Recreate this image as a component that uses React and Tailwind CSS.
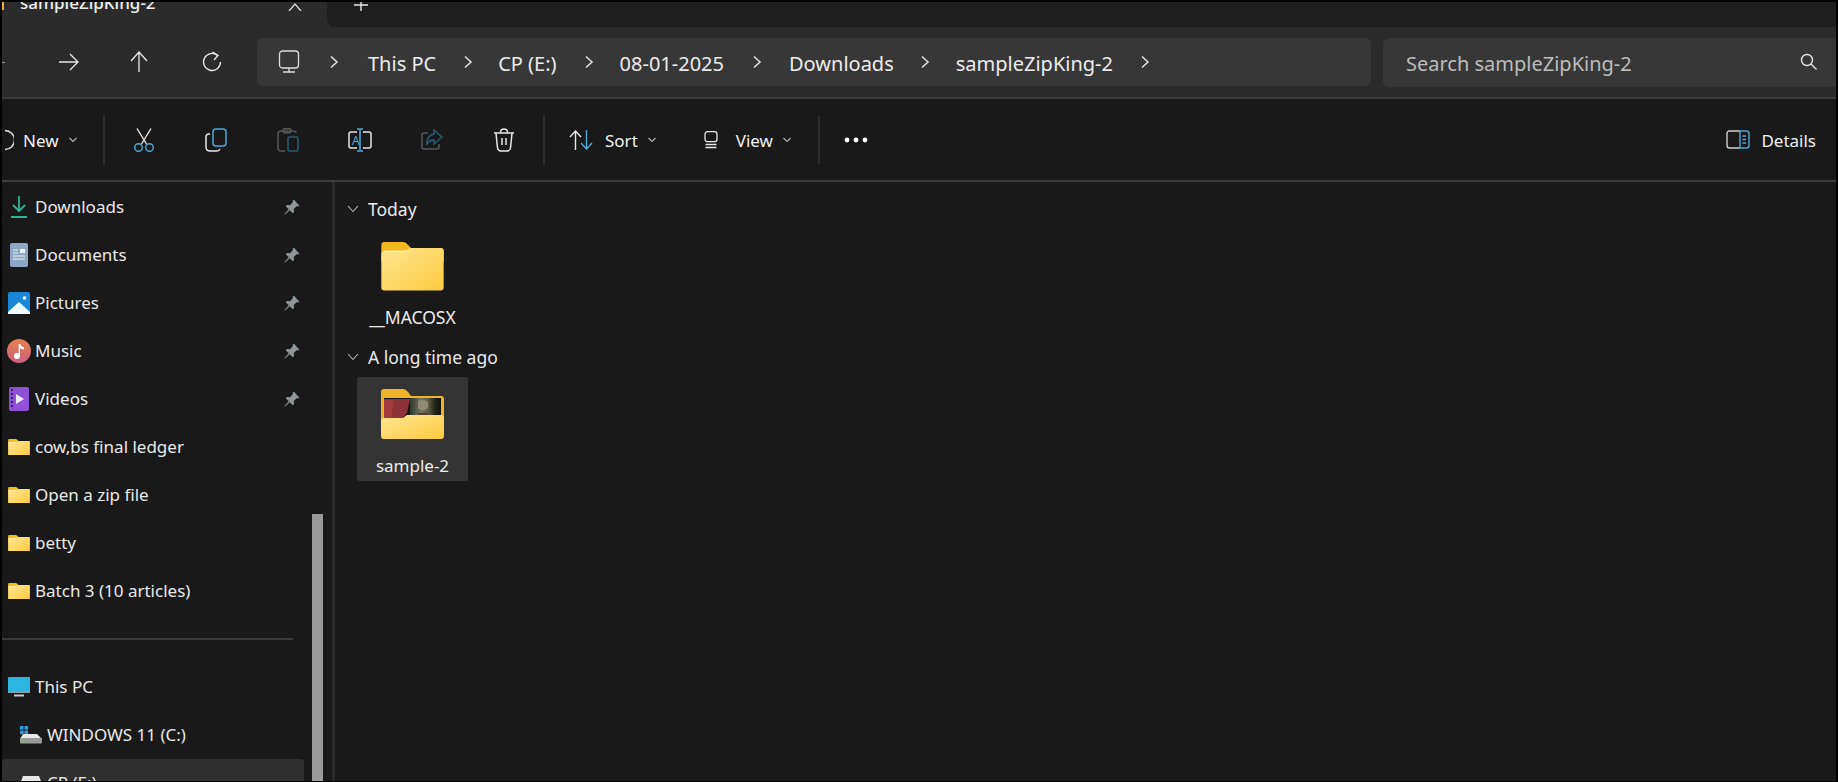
import React from "react";

const W = "#e8e8e8";
const B = "#4fa9d9";

function Chevron() {
  return (
    <svg width="10" height="16" viewBox="0 0 10 16" fill="none" stroke="#e4e4e4" strokeWidth="1.5" className="shrink-0">
      <path d="M2 2.5 L8 8 L2 13.5" />
    </svg>
  );
}

function SmallChevron() {
  return (
    <svg width="10" height="6" viewBox="0 0 10 6" fill="none" stroke="#b5b5b5" strokeWidth="1.1" className="shrink-0">
      <path d="M1.5 1 L5 4.5 L8.5 1" />
    </svg>
  );
}

function Crumb({ children, cls }) {
  return <span className={"mt-[3px] text-[20px] leading-[28px] text-[#ececec] whitespace-nowrap " + cls}>{children}</span>;
}

function ToolButton({ children }) {
  return <div className="w-[72px] h-full flex items-center justify-center shrink-0">{children}</div>;
}

function Sep() {
  return <div className="w-[2px] h-[48px] bg-[#2e2e2e] shrink-0" />;
}

function Folder({ size = 22, id }) {
  return (
    <svg width={size} height={size * 0.77} viewBox="0 0 63 49" className="shrink-0">
      <defs>
        <linearGradient id={id} x1="0" y1="0" x2="1" y2="1">
          <stop offset="0" stopColor="#ffe690" />
          <stop offset="1" stopColor="#fcca3f" />
        </linearGradient>
      </defs>
      <path d="M3 0 H22 Q25 0 27 3 L30 6 H60 Q63 6 63 9 V20 H0 V3 Q0 0 3 0 Z" fill="#f4b81f" />
      <path d="M0 12 Q0 9 3 9 H24 L29 6 H60 Q63 6 63 9 V46 Q63 49 60 49 H3 Q0 49 0 46 Z" fill={`url(#${id})`} />
      <path d="M2 9.5 H26" stroke="#fff6d6" strokeWidth="1.5" />
    </svg>
  );
}

function ThumbFolder() {
  return (
    <svg width="63" height="50" viewBox="0 0 63 50" className="shrink-0">
      <defs>
        <linearGradient id="tf" x1="0" y1="0" x2="1" y2="1">
          <stop offset="0" stopColor="#ffe690" />
          <stop offset="1" stopColor="#fcca3f" />
        </linearGradient>
        <linearGradient id="face" x1="0" y1="0" x2="1" y2="0">
          <stop offset="0" stopColor="#31382c" />
          <stop offset="0.35" stopColor="#6f7360" />
          <stop offset="0.6" stopColor="#5b5a44" />
          <stop offset="0.8" stopColor="#23251a" />
          <stop offset="1" stopColor="#101209" />
        </linearGradient>
      </defs>
      <path d="M3 0 H22 Q25 0 27 3 L30 7 H60 Q63 7 63 10 V32 H0 V3 Q0 0 3 0 Z" fill="#f0b428" />
      <rect x="3" y="9" width="57" height="20" fill="#16180f" />
      <path d="M3 10 H29 L26 24 L22 29 H3 Z" fill="#8d3238" />
      <path d="M3 12 L13 10 L10 29 H3 Z" fill="#a33a3e" />
      <rect x="29" y="9" width="31" height="19" fill="url(#face)" />
      <path d="M37 12 Q42 9 47 13 V19 Q42 24 37 19 Z" fill="#8e8a75" />
      <path d="M37 24 H47 V28 H37 Z" fill="#5a3a30" />
      <path d="M0 32 Q0 29 3 29 H22 L26 26 H60 Q63 26 63 29 V47 Q63 50 60 50 H3 Q0 50 0 47 Z" fill="url(#tf)" />
    </svg>
  );
}

function Pin() {
  return (
    <svg width="16" height="16" viewBox="0 0 16 16" fill="#8f9697" className="shrink-0">
      <path d="M9.6 0.6 L15.4 6.4 L14.2 7.4 L13 7 L9.8 10 L10 13 L8.8 14.2 L1.8 7.2 L3 6 L6 6.2 L9 3 L8.6 1.8 Z" />
      <path d="M5 10 L6 11 L1 15.6 L0.4 15 Z" />
    </svg>
  );
}

function Row({ icon, label, pinned, selected, indent }) {
  return (
    <div className={"h-[48px] shrink-0 flex items-center rounded-[3px] " + (selected ? "bg-[#2f2f2f]" : "")}>
      <div className={"w-[33px] flex items-center justify-center shrink-0 " + (indent ? "ml-[12px]" : "")}>{icon}</div>
      <span className="text-[17px] leading-[24px] text-[#e9e9e9] whitespace-nowrap">{label}</span>
      {pinned && <div className="ml-auto mr-[4px]"><Pin /></div>}
    </div>
  );
}

const DownloadIcon = (
  <svg width="18" height="24" viewBox="0 0 18 24" fill="none" stroke="#2fb596" strokeWidth="1.8">
    <path d="M9 1 V16 M3 10 L9 16 L15 10 M1 22 H17" />
  </svg>
);
const DocIcon = (
  <svg width="18" height="24" viewBox="0 0 18 24">
    <rect width="18" height="24" rx="2" fill="#8ea7c4" />
    <rect x="10" y="6" width="5" height="4" fill="#eef3f8" />
    <path d="M3 7 H8 M3 10 H8 M3 13 H15 M3 16 H15" stroke="#eef3f8" strokeWidth="1.2" />
  </svg>
);
const PicIcon = (
  <svg width="22" height="22" viewBox="0 0 22 22">
    <rect width="22" height="22" rx="2" fill="#1a86d8" />
    <circle cx="16.5" cy="6" r="1.8" fill="#fff" />
    <path d="M0 20 L11 10 L22 20 V22 H0 Z" fill="#f0f8ff" />
  </svg>
);
const MusicIcon = (
  <svg width="24" height="24" viewBox="0 0 24 24">
    <defs>
      <linearGradient id="mu" x1="0" y1="0" x2="0" y2="1">
        <stop offset="0" stopColor="#e8814d" />
        <stop offset="1" stopColor="#c9607f" />
      </linearGradient>
    </defs>
    <circle cx="12" cy="12" r="12" fill="url(#mu)" />
    <circle cx="10" cy="17" r="3" fill="#fff" />
    <path d="M11.6 17 V5 H13 Q14 8 17 8.5 V10.5 Q14.5 10.5 13 9 V17 Z" fill="#fff" />
  </svg>
);
const VideoIcon = (
  <svg width="20" height="24" viewBox="0 0 20 24">
    <rect width="20" height="24" rx="2" fill="#8e52d6" />
    <path d="M7 7 L15 12 L7 17 Z" fill="#f2eaff" />
    <path d="M2 3 H4 M2 7 H4 M2 11 H4 M2 15 H4 M2 19 H4" stroke="#3f1c78" strokeWidth="2" />
  </svg>
);
const PcIcon = (
  <svg width="22" height="20" viewBox="0 0 22 20">
    <rect width="22" height="16" rx="1" fill="#2cb5e0" />
    <rect y="14" width="22" height="2" fill="#8f9aa3" />
    <path d="M6 18.5 H16" stroke="#c8ced3" strokeWidth="2" />
  </svg>
);
const WinDrive = (
  <svg width="22" height="18" viewBox="0 0 22 18">
    <rect x="0" y="0" width="3.6" height="3.6" fill="#2e9be0" />
    <rect x="4.5" y="0" width="3.6" height="3.6" fill="#2e9be0" />
    <rect x="0" y="4.5" width="3.6" height="3.6" fill="#2e9be0" />
    <rect x="4.5" y="4.5" width="3.6" height="3.6" fill="#2e9be0" />
    <path d="M3 8 H17 L22 13 H0 Z" fill="#e8e8e8" />
    <rect y="12" width="22" height="5.5" rx="0.8" fill="#9a9a9a" />
    <rect x="3" y="14" width="2" height="2" fill="#5bd04f" />
  </svg>
);
const Drive = (
  <svg width="22" height="18" viewBox="0 0 22 18">
    <path d="M3 2 H19 L22 10 H0 Z" fill="#e8e8e8" />
    <rect y="9" width="22" height="7" rx="1" fill="#9a9a9a" />
  </svg>
);

function SectionHeader({ label }) {
  return (
    <div className="h-[34px] flex items-center shrink-0 pl-[10px]">
      <svg width="12" height="8" viewBox="0 0 12 8" fill="none" stroke="#b8b8b8" strokeWidth="1.1" className="shrink-0">
        <path d="M1 1 L6 6.5 L11 1" />
      </svg>
      <span className="ml-[9px] -mt-[1px] text-[17.5px] leading-[24px] text-[#e9e9e9] whitespace-nowrap">{label}</span>
    </div>
  );
}

function Tile({ icon, label, selected, size }) {
  return (
    <div className={"ml-[20px] w-[111px] h-[104px] shrink-0 flex flex-col items-center rounded-[2px] pt-[12px] " + (selected ? "bg-[#343434]" : "")}>
      <div className="h-[50px] flex items-start">{icon}</div>
      <span className={"leading-[24px] text-[#ececec] whitespace-nowrap " + size}>{label}</span>
    </div>
  );
}

export default function App() {
  return (
    <div className="w-[1838px] h-[782px] overflow-hidden bg-black pt-[2px] pl-[2px] pr-[2px] flex flex-col font-['Noto_Sans',sans-serif]">
      {/* tab strip */}
      <div className="h-[25px] shrink-0 flex bg-[#2b2b2b] overflow-hidden">
        <div className="w-[325px] shrink-0 flex items-start relative overflow-hidden">
          <div className="w-[2px] h-[8px] bg-[#e8b33a]" />
          <span className="ml-[16px] -mt-[11px] text-[17px] font-medium leading-[24px] text-[#f0f0f0] whitespace-nowrap">sampleZipKing-2</span>
          <svg width="16" height="8" viewBox="0 0 16 8" fill="none" stroke="#dcdcdc" strokeWidth="1.3" className="ml-[131px] mt-[1px]">
            <path d="M2 8 L8 1 L14 8" />
          </svg>
        </div>
        <div className="flex-1 bg-[#1e1e1e] rounded-bl-[8px] flex items-start pl-[26px]">
          <svg width="16" height="9" viewBox="0 0 16 9" fill="none" stroke="#e8e8e8" strokeWidth="1.4">
            <path d="M8 0 V9 M1 3 H15" />
          </svg>
        </div>
      </div>
      {/* address row */}
      <div className="h-[70px] shrink-0 bg-[#2b2b2b] flex items-center">
        <div className="w-[255px] h-full shrink-0 flex items-center relative">
          <div className="w-[3px] h-px bg-[#9a9a9a]" />
          <svg width="24" height="22" viewBox="0 0 24 22" fill="none" stroke={W} strokeWidth="1.3" className="ml-[51px]">
            <path d="M3 11 H21 M14 3 L22 11 L14 19" />
          </svg>
          <svg width="22" height="24" viewBox="0 0 22 24" fill="none" stroke={W} strokeWidth="1.3" className="ml-[48px]">
            <path d="M11 22 V3 M3 11 L11 2 L19 11" />
          </svg>
          <svg width="22" height="22" viewBox="0 0 22 22" fill="none" stroke={W} strokeWidth="1.3" className="ml-[51px]">
            <path d="M16.5 4.5 A8.5 8.5 0 1 0 19.5 11" />
            <path d="M11.5 1 L17 4.5 L13 9" />
          </svg>
        </div>
        <div className="w-[1114px] h-[48px] shrink-0 ml-0 rounded-[6px] bg-[#373737] flex items-center">
          <svg width="24" height="24" viewBox="0 0 24 24" fill="none" stroke="#dedede" strokeWidth="1.3" className="ml-[20px] shrink-0">
            <rect x="2.5" y="1" width="19" height="17" rx="3" />
            <path d="M12 18 V22 M6 22 H18" />
          </svg>
          <div className="ml-[28px]"><Chevron /></div>
          <Crumb cls="ml-[29px]">This PC</Crumb>
          <div className="ml-[27px]"><Chevron /></div>
          <Crumb cls="ml-[25px]">CP (E:)</Crumb>
          <div className="ml-[27px]"><Chevron /></div>
          <Crumb cls="ml-[26px]">08-01-2025</Crumb>
          <div className="ml-[28px]"><Chevron /></div>
          <Crumb cls="ml-[27px]">Downloads</Crumb>
          <div className="ml-[26px]"><Chevron /></div>
          <Crumb cls="ml-[26px]">sampleZipKing-2</Crumb>
          <div className="ml-[27px]"><Chevron /></div>
        </div>
        <div className="flex-1 ml-[12px] h-[49px] rounded-l-[6px] bg-[#373737] flex items-center pl-[23px]">
          <span className="mt-[3px] text-[20px] leading-[28px] text-[#bdbdbd] whitespace-nowrap">Search sampleZipKing-2</span>
          <svg width="18" height="18" viewBox="0 0 18 18" fill="none" stroke="#e6e6e6" strokeWidth="1.4" className="ml-auto mr-[18px]">
            <circle cx="7" cy="7" r="5.5" />
            <path d="M11 11 L16.5 16.5" />
          </svg>
        </div>
      </div>
      <div className="h-[2px] shrink-0 bg-[#3c3c3c]" />
      {/* toolbar */}
      <div className="h-[81px] shrink-0 bg-[#191919] flex items-center overflow-hidden">
        <div className="w-[101px] h-full shrink-0 flex items-center">
          <svg width="10" height="22" viewBox="0 0 10 22" fill="none" stroke={W} strokeWidth="1.4" className="shrink-0 ml-[2px]">
            <path d="M1 1.5 A9.5 9.5 0 0 1 1 20.5" />
          </svg>
          <span className="ml-[9px] mt-[2px] text-[17px] leading-[24px] text-[#f0f0f0]">New</span>
          <div className="ml-[9px]"><SmallChevron /></div>
        </div>
        <Sep />
        <div className="w-[3px] shrink-0" />
        <ToolButton>
          <svg width="22" height="24" viewBox="0 0 22 24" fill="none" strokeWidth="1.4">
            <path d="M4 0.5 L13.5 16 M18 0.5 L8.5 16" stroke={W} />
            <circle cx="5.5" cy="19.5" r="3.8" stroke={B} />
            <circle cx="16.5" cy="19.5" r="3.8" stroke={B} />
          </svg>
        </ToolButton>
        <ToolButton>
          <svg width="22" height="24" viewBox="0 0 22 24" fill="none" strokeWidth="1.5">
            <path d="M5 6 H4 Q1 6 1 9 V19 Q1 23 5 23 H12 Q14 23 15 21" stroke={W} />
            <rect x="8" y="1" width="13" height="17" rx="3" stroke={B} />
          </svg>
        </ToolButton>
        <ToolButton>
          <svg width="22" height="24" viewBox="0 0 22 24" fill="none" strokeWidth="1.5">
            <path d="M8 23 H4 Q1 23 1 20 V6 Q1 3 4 3 H16 Q19 3 19 5" stroke="#575757" />
            <rect x="6" y="0.8" width="8" height="4" rx="1.5" stroke="#575757" />
            <rect x="11" y="9" width="10" height="14" rx="1.5" stroke="#2a5d76" />
          </svg>
        </ToolButton>
        <ToolButton>
          <svg width="24" height="24" viewBox="0 0 24 24" fill="none" strokeWidth="1.5">
            <path d="M9 4 H3 Q1 4 1 6 V18 Q1 20 3 20 H9 M15 4 H21 Q23 4 23 6 V18 Q23 20 21 20 H15" stroke={W} />
            <path d="M12 1 V23 M9 1 H15 M9 23 H15" stroke={B} />
            <text x="4" y="16.5" fontSize="12" fill={B} fontFamily="Noto Sans, sans-serif">A</text>
          </svg>
        </ToolButton>
        <ToolButton>
          <svg width="22" height="22" viewBox="0 0 22 22" fill="none" strokeWidth="1.5">
            <path d="M7 4 H3 Q1 4 1 6 V18 Q1 20 3 20 H16 Q18 20 18 18 V15" stroke="#575757" />
            <path d="M13 1 L21 8 L13 15 V11 Q8 11 5.5 16 Q6 6 13 5 Z" stroke="#2a5d76" />
          </svg>
        </ToolButton>
        <ToolButton>
          <svg width="22" height="24" viewBox="0 0 22 24" fill="none" stroke={W} strokeWidth="1.5">
            <path d="M1 5 H21 M7.5 4.5 Q7.5 1 11 1 Q14.5 1 14.5 4.5" />
            <path d="M3 5 L4.5 20 Q5 23 8 23 H14 Q17 23 17.5 20 L19 5" />
            <path d="M9 10 V17 M13 10 V17" />
          </svg>
        </ToolButton>
        <div className="w-[3px] shrink-0" />
        <Sep />
        <svg width="24" height="20" viewBox="0 0 24 20" fill="none" strokeWidth="1.4" className="ml-[24px] shrink-0">
          <path d="M6.5 20 V1 M1 7 L6.5 1 L12 7" stroke={W} />
          <path d="M17.5 0 V19 M12 13 L17.5 19 L23 13" stroke={B} />
        </svg>
        <span className="ml-[12px] mt-[2px] text-[17px] leading-[24px] text-[#f0f0f0]">Sort</span>
        <div className="ml-[9px]"><SmallChevron /></div>
        <svg width="14" height="18" viewBox="0 0 14 18" fill="none" stroke={W} strokeWidth="1.3" className="ml-[47px] shrink-0">
          <rect x="1" y="0.7" width="12" height="10" rx="2.5" />
          <path d="M1.5 13.5 H12.5 M1.5 16.5 H12.5" />
        </svg>
        <span className="ml-[18px] mt-[2px] text-[17px] leading-[24px] text-[#f0f0f0]">View</span>
        <div className="ml-[9px]"><SmallChevron /></div>
        <div className="ml-[26px]"><Sep /></div>
        <svg width="24" height="6" viewBox="0 0 24 6" fill="#ffffff" className="ml-[24px] shrink-0">
          <circle cx="3" cy="3" r="2.4" />
          <circle cx="12" cy="3" r="2.4" />
          <circle cx="21" cy="3" r="2.4" />
        </svg>
        <svg width="24" height="19" viewBox="0 0 24 19" fill="none" strokeWidth="1.4" className="ml-auto shrink-0">
          <path d="M14 1 H3.5 Q1 1 1 3.5 V15.5 Q1 18 3.5 18 H14" stroke="#cfcfcf" />
          <path d="M14 1 H20.5 Q23 1 23 3.5 V15.5 Q23 18 20.5 18 H14 Z" stroke={B} />
          <path d="M16.5 6 H20 M16.5 9.5 H20 M16.5 13 H20" stroke={B} />
        </svg>
        <span className="ml-[11px] mr-[20px] mt-[2px] text-[17px] leading-[24px] text-[#f0f0f0]">Details</span>
      </div>
      <div className="h-[2px] shrink-0 bg-[#3c3c3c]" />
      {/* body */}
      <div className="flex-1 min-h-0 flex bg-[#191919] overflow-hidden mb-px">
        <div className="w-[302px] shrink-0 flex flex-col pt-px">
          <Row icon={DownloadIcon} label="Downloads" pinned />
          <Row icon={DocIcon} label="Documents" pinned />
          <Row icon={PicIcon} label="Pictures" pinned />
          <Row icon={MusicIcon} label="Music" pinned />
          <Row icon={VideoIcon} label="Videos" pinned />
          <Row icon={<Folder id="s1" />} label="cow,bs final ledger" />
          <Row icon={<Folder id="s2" />} label="Open a zip file" />
          <Row icon={<Folder id="s3" />} label="betty" />
          <Row icon={<Folder id="s4" />} label="Batch 3 (10 articles)" />
          <div className="h-[2px] w-[291px] mt-[23px] mb-[23px] bg-[#3a3a3a] shrink-0" />
          <Row icon={PcIcon} label="This PC" />
          <Row icon={WinDrive} label="WINDOWS 11 (C:)" indent />
          <Row icon={Drive} label="CP (E:)" indent selected />
        </div>
        <div className="w-[11px] ml-[8px] shrink-0 mt-[332px] bg-[#9a9a9a]" />
        <div className="w-[9px] shrink-0" />
        <div className="w-[3px] shrink-0 bg-[#2a2a2a]" />
        <div className="w-[2px] shrink-0" />
        <div className="flex-1 flex flex-col pt-[10px]">
          <SectionHeader label="Today" />
          <div className="mt-[4px]">
            <Tile icon={<Folder size={63} id="t1" />} label="__MACOSX" size="mt-[13px] text-[17.5px]" />
          </div>
          <div className="mt-[6px]">
            <SectionHeader label="A long time ago" />
          </div>
          <div className="mt-[3px]">
            <Tile icon={<ThumbFolder />} label="sample-2" size="mt-[15px] text-[17px]" selected />
          </div>
        </div>
      </div>
    </div>
  );
}
